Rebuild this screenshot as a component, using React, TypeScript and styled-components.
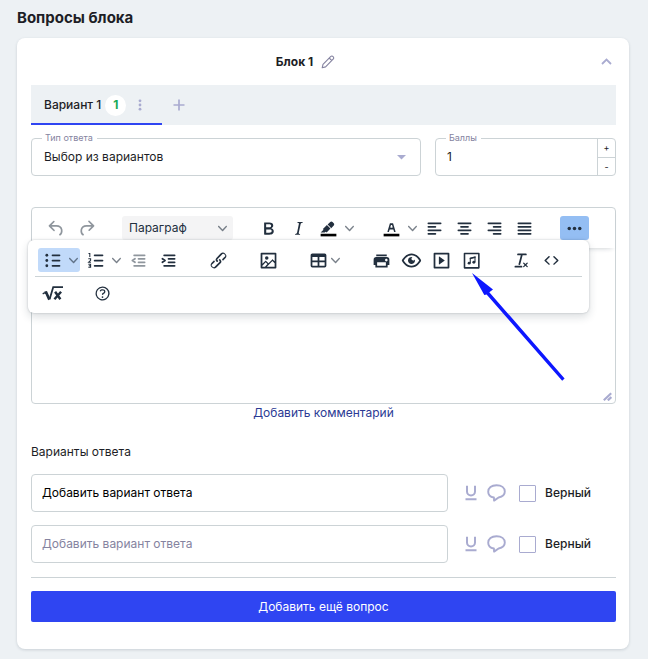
import React from "react";
import styled, { createGlobalStyle, css } from "styled-components";

const color = {
  page: "#edf1f4",
  ink: "#1d1e26",
  toolInk: "#222f3e",
  line: "#ccd3d6",
  muted: "#8583a0",
  lilac: "#a9abd0",
  blue: "#2f45f2",
  link: "#2b3a94",
  green: "#18a957",
};

const GlobalStyle = createGlobalStyle`
  *, *::before, *::after { box-sizing: border-box; }
  body {
    margin: 0;
    background: ${color.page};
    color: ${color.ink};
    font: 400 12px/16px Inter, "Liberation Sans", sans-serif;
  }
  button, input, select, textarea { font: inherit; color: inherit; letter-spacing: inherit; }
  button { padding: 0; border: 0; background: none; cursor: pointer; }
  svg { display: block; }
`;

/* ---------- page frame ---------- */

const Page = styled.main`
  padding: 8px 19px 10px 17px;
`;

const PageTitle = styled.h1`
  margin: 0 0 10px;
  font-size: 15px;
  line-height: 20px;
  font-weight: 700;
`;

const Card = styled.section`
  padding: 0 13px 27px 14px;
  border-radius: 8px;
  background: #fff;
  box-shadow: 0 1px 3px rgba(40, 60, 80, 0.18);
`;

const CardHeader = styled.header`
  display: flex;
  align-items: center;
  height: 47px;
`;

const CardTitle = styled.div`
  flex: 1;
  display: flex;
  align-items: center;
  justify-content: center;
  gap: 8px;
`;

const BlockName = styled.h2`
  margin: 0;
  font-size: 12px;
  font-weight: 700;
`;

const IconButton = styled.button<{ $width?: number; $tone?: string }>`
  display: flex;
  align-items: center;
  justify-content: center;
  width: ${(p) => (p.$width ? `${p.$width}px` : "auto")};
  color: ${(p) => p.$tone ?? color.lilac};
`;

const CollapseButton = styled(IconButton)`
  justify-content: flex-end;
  padding-right: 4px;
`;

/* ---------- tabs ---------- */

const TabBar = styled.div`
  display: flex;
  height: 40px;
  margin-bottom: 13px;
  background: ${color.page};
`;

const TabItem = styled.div`
  display: flex;
  align-items: center;
  padding: 2px 8px 0 13px;
  border-bottom: 2px solid ${color.blue};
`;

const TabButton = styled.button`
  display: flex;
  align-items: center;
  gap: 4px;
  font-weight: 500;
`;

const Count = styled.span`
  display: grid;
  place-items: center;
  width: 21px;
  height: 21px;
  border-radius: 50%;
  background: #fff;
  color: ${color.green};
  font-weight: 700;
`;

/* ---------- form fields ---------- */

const Fields = styled.div`
  display: flex;
  gap: 14px;
  margin-bottom: 31px;
`;

const Field = styled.div<{ $width?: number }>`
  position: relative;
  display: flex;
  ${(p) => (p.$width ? `width: ${p.$width}px;` : "flex: 1;")}
  height: 38px;
  border: 1px solid ${color.line};
  border-radius: 4px;
`;

const FieldLabel = styled.label`
  position: absolute;
  top: -7px;
  left: 10px;
  padding: 0 4px 0 3px;
  background: #fff;
  color: ${color.muted};
  font-size: 9px;
  line-height: 12px;
`;

const Select = styled.select`
  flex: 1;
  min-width: 0;
  padding: 0 12px;
  border: 0;
  appearance: none;
  background: transparent;
`;

const SelectCaret = styled.svg`
  position: absolute;
  right: 14px;
  top: 16px;
  color: ${color.lilac};
  pointer-events: none;
`;

const NumberInput = styled.input`
  flex: 1;
  min-width: 0;
  padding: 0 11px;
  border: 0;
  background: transparent;
`;

const Stepper = styled.div`
  display: grid;
  grid-template-rows: 1fr 1fr;
  width: 18px;
  border-left: 1px solid ${color.line};
  font-size: 9px;
  line-height: 12px;

  button + button { border-top: 1px solid ${color.line}; }
`;

/* ---------- rich text editor ---------- */

const Editor = styled.div`
  position: relative;
  display: flex;
  flex-direction: column;
  height: 197px;
  border: 1px solid ${color.line};
  border-radius: 4px;
  color: ${color.toolInk};
`;

const ToolRow = styled.div<{ $main?: boolean }>`
  display: flex;
  align-items: center;
  gap: 21px;
  ${(p) =>
    p.$main
      ? css`
          height: 40px;
          padding: 0 26px 0 10px;
          border-radius: 4px 4px 0 0;
          box-shadow: 0 3px 4px -2px rgba(34, 47, 62, 0.12), 0 6px 6px -6px rgba(34, 47, 62, 0.1);
        `
      : css`
          box-sizing: content-box;
          height: 32px;
          padding: 0 3px;
        `}
`;

const ToolGroup = styled.div`
  display: flex;
  gap: 1px;
`;

const ToolButton = styled.button<{ $wide?: boolean; $split?: boolean; $tint?: string; $faded?: boolean }>`
  display: flex;
  align-items: center;
  justify-content: flex-start;
  gap: ${(p) => (p.$split ? 6 : 2)}px;
  width: ${(p) => (p.$wide ? 42 : 29)}px;
  height: 24px;
  padding-left: 4px;
  border-radius: 3px;
  background: ${(p) => p.$tint ?? "transparent"};
  opacity: ${(p) => (p.$faded ? 0.5 : 1)};
`;

const FormatButton = styled.button`
  display: flex;
  align-items: center;
  justify-content: space-between;
  width: 111px;
  height: 24px;
  padding: 0 6px 0 7px;
  border-radius: 3px;
  background: #f4f4f5;
`;

const MorePanel = styled.div`
  position: absolute;
  z-index: 1;
  top: 32px;
  left: -4px;
  right: 26px;
  padding: 4px 7px;
  border-radius: 6px;
  background: #fff;
  box-shadow: 0 0 2px rgba(34, 47, 62, 0.28), 0 4px 8px rgba(34, 47, 62, 0.16);

  ${ToolRow} + ${ToolRow} { border-top: 1px solid ${color.line}; }
`;

const EditArea = styled.textarea`
  flex: 1;
  padding: 12px;
  border: 0;
  outline: 0;
  resize: none;
  background: transparent;
`;

const ResizeGrip = styled.svg`
  position: absolute;
  right: 3px;
  bottom: 2px;
  color: ${color.lilac};
`;

const Pointer = styled.svg`
  position: absolute;
  z-index: 2;
  top: 64px;
  left: 438px;
  pointer-events: none;
`;

const CommentLink = styled.a`
  display: block;
  width: fit-content;
  margin: 1px auto 23px;
  color: ${color.link};
  text-decoration: none;
`;

/* ---------- answers ---------- */

const SectionTitle = styled.h3`
  margin: 0 0 14px;
  font-size: 12px;
  font-weight: 400;
`;

const AnswerRow = styled.div`
  display: flex;
  align-items: center;
  padding-right: 25px;
  margin-bottom: 13px;
`;

const AnswerInput = styled.input`
  flex: 1;
  min-width: 0;
  height: 38px;
  margin-right: 17px;
  padding: 0 10px 2px;
  border: 1px solid ${color.line};
  border-radius: 4px;
  color: #000;

  &::placeholder { color: ${color.muted}; opacity: 1; }
`;

const AnswerTools = styled.div`
  display: flex;
  align-items: center;
  gap: 10px;
  margin-right: 13px;
`;

const CorrectLabel = styled.label`
  display: flex;
  align-items: center;
  gap: 9px;
  font-weight: 500;

  input {
    appearance: none;
    width: 17px;
    height: 17px;
    margin: 0;
    border: 1px solid ${color.lilac};
    border-radius: 1px;
    background: #fff;
  }
  input:checked { background: ${color.blue}; }
`;

const Divider = styled.hr`
  height: 1px;
  margin: 14px 0 13px;
  border: 0;
  background: ${color.line};
`;

const PrimaryButton = styled.button`
  width: 100%;
  height: 31px;
  border-radius: 2px;
  background: ${color.blue};
  color: #fff;
`;

/* ---------- drawings ---------- */

const icons: Record<string, React.ReactNode> = {
  undo: <path d="M6.4 8H12c3.7 0 6.2 2 6.8 5.1.6 2.7-.4 5.6-2.3 6.8a1 1 0 0 1-1-1.8c1.1-.6 1.8-2.7 1.4-4.6-.5-2.1-2.1-3.5-4.9-3.5H6.4l3.3 3.3a1 1 0 1 1-1.4 1.4l-5-5a1 1 0 0 1 0-1.4l5-5a1 1 0 0 1 1.4 1.4L6.4 8Z" />,
  redo: <path d="M17.6 10H12c-2.8 0-4.4 1.4-4.9 3.5-.4 2 .3 4 1.4 4.6a1 1 0 1 1-1 1.8c-2-1.2-2.9-4.1-2.3-6.8.6-3 3-5.1 6.8-5.1h5.6l-3.3-3.3a1 1 0 1 1 1.4-1.4l5 5a1 1 0 0 1 0 1.4l-5 5a1 1 0 0 1-1.4-1.4l3.3-3.3Z" />,
  bold: <path d="M7.8 19c-.3 0-.5 0-.6-.2l-.2-.5V5.7c0-.2 0-.4.2-.5l.6-.2h5c1.5 0 2.7.3 3.5 1 .7.6 1.1 1.4 1.1 2.5a3 3 0 0 1-.6 1.9c-.4.6-1 1-1.6 1.2.4.1.9.3 1.3.6s.8.7 1 1.2c.4.4.5 1 .5 1.6 0 1.3-.4 2.3-1.3 3-.8.7-2.1 1-3.8 1H7.8Zm5-8.3c.6 0 1.2-.1 1.6-.5.4-.3.6-.7.6-1.3 0-1.1-.8-1.7-2.3-1.7H9.3v3.5h3.4Zm.5 6c.7 0 1.3-.1 1.7-.4.4-.4.6-.9.6-1.5s-.2-1-.7-1.4c-.4-.3-1-.4-2-.4H9.4v3.8h4Z" />,
  italic: <path d="m16.7 4.7-.1.9h-.3c-.6 0-1 0-1.4.3-.3.3-.4.6-.5 1.1l-2.1 9.8v.6c0 .5.4.8 1.4.8h.2l-.2.8H8l.2-.8h.2c1.1 0 1.8-.5 2-1.5l2-9.8.1-.5c0-.6-.4-.8-1.4-.8h-.3l.2-.9h5.8Z" />,
  highlight: (
    <>
      <path d="M3 18h18v3H3z" fill="#000" />
      <path d="M7.7 16.7H3l3.3-3.3-.7-.8L10.2 8l4 4.1-4 4.2c-.2.2-.6.2-.8 0l-.6-.7-1.1 1.1Zm5-7.5L11 7.4l3-2.9a2 2 0 0 1 2.6 0L18 6c.7.7.7 2 0 2.7l-2.900 2.900-1.800-1.800-.5-.6Z" />
    </>
  ),
  textColor: (
    <>
      <path d="M3 18h18v3H3z" fill="#000" />
      <path d="M8.7 16h-.8a.5.5 0 0 1-.5-.6l2.7-9c.1-.3.3-.4.5-.4h2.8c.2 0 .4.1.5.4l2.7 9a.5.5 0 0 1-.5.6h-.8a.5.5 0 0 1-.4-.4l-.7-2.2c0-.3-.3-.4-.5-.4h-3.4c-.2 0-.4.1-.5.4l-.7 2.2c0 .3-.2.4-.4.4Zm2.6-7.6-.6 2a.5.5 0 0 0 .5.6h1.6a.5.5 0 0 0 .5-.6l-.6-2c0-.3-.3-.4-.5-.4h-.4c-.2 0-.4.1-.5.4Z" />
    </>
  ),
  alignLeft: <path fill="none" stroke="currentColor" strokeWidth="2" strokeLinecap="round" d="M5 6h14M5 10h8M5 14h14M5 18h8" />,
  alignCenter: <path fill="none" stroke="currentColor" strokeWidth="2" strokeLinecap="round" d="M5 6h14M8 10h8M5 14h14M8 18h8" />,
  alignRight: <path fill="none" stroke="currentColor" strokeWidth="2" strokeLinecap="round" d="M5 6h14M11 10h8M5 14h14M11 18h8" />,
  alignJustify: <path fill="none" stroke="currentColor" strokeWidth="2" strokeLinecap="round" d="M5 6h14M5 10h14M5 14h14M5 18h14" />,
  more: (
    <>
      <circle cx="6" cy="12" r="2" />
      <circle cx="12" cy="12" r="2" />
      <circle cx="18" cy="12" r="2" />
    </>
  ),
  bullets: (
    <>
      <path fill="none" stroke="currentColor" strokeWidth="2" strokeLinecap="round" d="M12 6h8M12 12h8M12 18h8" />
      <circle cx="5.5" cy="6" r="1.6" />
      <circle cx="5.5" cy="12" r="1.6" />
      <circle cx="5.5" cy="18" r="1.6" />
    </>
  ),
  numbers: (
    <>
      <path fill="none" stroke="currentColor" strokeWidth="2" strokeLinecap="round" d="M11 6h9M11 12h9M11 18h9" />
      <path fill="none" stroke="currentColor" strokeWidth="1.2" d="M4 4h1.5v4M3.8 10h2.6v1.8L4.2 13.9h2.6M3.8 16.2h2.6v3.6H3.8M4.4 18h2" />
    </>
  ),
  outdent: (
    <>
      <path fill="none" stroke="currentColor" strokeWidth="2" strokeLinecap="round" d="M7 6h12M12 10h7M12 14h7M7 18h12" />
      <path fill="none" stroke="currentColor" strokeWidth="2" strokeLinecap="round" strokeLinejoin="round" d="m8 10-3 2 3 2" />
    </>
  ),
  indent: (
    <>
      <path fill="none" stroke="currentColor" strokeWidth="2" strokeLinecap="round" d="M7 6h12M12 10h7M12 14h7M7 18h12" />
      <path fill="none" stroke="currentColor" strokeWidth="2" strokeLinecap="round" strokeLinejoin="round" d="m5 10 3 2-3 2" />
    </>
  ),
  link: <path d="M6.2 12.3a1 1 0 0 1 1.4 1.4l-2 2a2 2 0 1 0 2.6 2.8l4.8-4.8a1 1 0 0 0 0-1.4 1 1 0 1 1 1.4-1.3 2.9 2.9 0 0 1 0 4L9.6 20a3.9 3.9 0 0 1-5.5-5.5l2-2Zm11.6-.6a1 1 0 0 1-1.4-1.4l2-2a2 2 0 1 0-2.6-2.8L11 10.3a1 1 0 0 0 0 1.4A1 1 0 1 1 9.6 13a2.9 2.9 0 0 1 0-4L14.4 4a3.9 3.9 0 0 1 5.5 5.5l-2 2Z" />,
  image: <path d="m5 15.7 3.3-3.2c.3-.3.7-.3 1 0L12 15l4.1-4c.3-.4.8-.4 1 0l2 1.9V5H5v10.7ZM5 18V19h3l2.8-2.9-2-2L5 17.9Zm14-3-2.5-2.4-6.4 6.5H19v-4ZM4 3h16c.6 0 1 .4 1 1v16c0 .6-.4 1-1 1H4a1 1 0 0 1-1-1V4c0-.6.4-1 1-1Zm6 8a2 2 0 1 0 0-4 2 2 0 0 0 0 4Z" />,
  table: <path d="M19 4a2 2 0 0 1 2 2v12a2 2 0 0 1-2 2H5a2 2 0 0 1-2-2V6c0-1.1.9-2 2-2h14ZM5 14v4h6v-4H5Zm14 0h-6v4h6v-4Zm0-6h-6v4h6V8ZM5 12h6V8H5v4Z" />,
  print: <path d="M18 8H6a3 3 0 0 0-3 3v6h2v3h14v-3h2v-6a3 3 0 0 0-3-3Zm-1 10H7v-4h10v4Zm.5-5c-.8 0-1.5-.7-1.5-1.5s.7-1.5 1.5-1.5 1.5.7 1.5 1.5-.7 1.5-1.5 1.5Zm.5-8H6v2h12V5Z" />,
  preview: <path d="M3.5 12.5c.5.8 1.1 1.6 1.8 2.3 2 2 4.2 3.2 6.7 3.2s4.7-1.2 6.7-3.2a16.2 16.2 0 0 0 2.1-2.8 15.7 15.7 0 0 0-2.1-2.8c-2-2-4.2-3.2-6.7-3.2a9.3 9.3 0 0 0-6.7 3.2A16.2 16.2 0 0 0 3.2 12c0 .2.2.3.3.5Zm-2.4-1 .7-1.2L4 7.8C6.2 5.4 8.9 4 12 4c3 0 5.8 1.4 8.1 3.8a18.2 18.2 0 0 1 2.8 3.7v1l-.7 1.2-2.1 2.5c-2.3 2.4-5 3.8-8.1 3.8-3 0-5.8-1.4-8.1-3.8a18.2 18.2 0 0 1-2.8-3.7 1 1 0 0 1 0-1Zm12-3.3a2 2 0 1 0 2.7 2.6 4 4 0 1 1-2.6-2.6Z" />,
  embed: <path d="M4 3h16c.6 0 1 .4 1 1v16c0 .6-.4 1-1 1H4a1 1 0 0 1-1-1V4c0-.6.4-1 1-1Zm1 2v14h14V5H5Zm4.8 2.6 5.6 4a.5.5 0 0 1 0 .8l-5.6 4A.5.5 0 0 1 9 16V8a.5.5 0 0 1 .8-.4Z" />,
  audio: (
    <>
      <path fill="none" stroke="currentColor" strokeWidth="1.8" strokeLinejoin="round" d="M4 4h16.4v16.4H4z" />
      <path fill="none" stroke="currentColor" strokeWidth="1.2" d="M10.6 14.800V9.500l5.400-1.400v5.500" />
      <path d="M10 8.900 16.600 7.200v1.800L10 10.700z" />
      <circle cx="9.300" cy="15" r="1.700" />
      <circle cx="14.700" cy="14" r="1.700" />
    </>
  ),
  clear: <path d="M13.2 6a1 1 0 0 1 0 .2l-2.6 10a1 1 0 0 1-1 .8h-.2a.8.8 0 0 1-.8-1l2.6-10H8a1 1 0 1 1 0-2h9a1 1 0 0 1 0 2h-3.8ZM5 18h7a1 1 0 0 1 0 2H5a1 1 0 0 1 0-2Zm13 1.5L16.5 18 15 19.5a.7.7 0 0 1-1-1l1.5-1.5-1.5-1.5a.7.7 0 0 1 1-1l1.5 1.5 1.5-1.5a.7.7 0 0 1 1 1L17.5 17l1.5 1.5a.7.7 0 0 1-1 1Z" />,
  code: <path d="M9.8 15.7c.3.3.3.8 0 1-.3.4-.9.4-1.2 0l-4.4-4.1a.8.8 0 0 1 0-1.2l4.4-4.2c.3-.3.9-.3 1.2 0 .3.3.3.8 0 1.1L6 12l3.8 3.7ZM14.2 15.7c-.3.3-.3.8 0 1 .4.4.9.4 1.2 0l4.4-4.1c.3-.3.3-.9 0-1.2l-4.4-4.2a.8.8 0 0 0-1.2 0c-.3.3-.3.8 0 1.1L18 12l-3.8 3.7Z" />,
  math: (
    <>
      <path fill="none" stroke="currentColor" strokeWidth="2" d="M8.700 18.600 12.800 4.800H24" />
      <path fill="none" stroke="currentColor" strokeWidth="3" d="m3 11.200 1.800-.3L8.400 19" />
      <path fill="none" stroke="currentColor" strokeWidth="1.400" d="m.8 12.400 2.500-1.400" />
      <path fill="none" stroke="currentColor" strokeWidth="2.800" d="m15 10 6 8.600M14.200 18.600 21.800 10" />
    </>
  ),
  help: (
    <>
      <path d="M12 5.5a6.5 6.5 0 0 0-6 9 6.3 6.3 0 0 0 1.4 2l1 1a6.3 6.3 0 0 0 3.6 1 6.5 6.5 0 0 0 6-9 6.3 6.3 0 0 0-1.4-2l-1-1a6.3 6.3 0 0 0-3.6-1ZM12 4a7.8 7.8 0 0 1 5.7 2.3A8 8 0 1 1 12 4Z" />
      <path d="M9.6 9.7a.7.7 0 0 1-.7-.8c0-1.1 1.5-1.8 3.2-1.8 1.8 0 3.2.8 3.2 2.4 0 1.4-.4 2.1-1.5 2.8-.2 0-.3.1-.3.2a2 2 0 0 0-.8.8.8.8 0 0 1-1.4-.6c.3-.7.8-1 1.3-1.5l.4-.2c.7-.4.8-.6.8-1.5 0-.5-.6-.9-1.7-.9-.5 0-1 .1-1.4.3-.2 0-.3.1-.3.2v-.2c0 .4-.4.8-.8.8Z" />
      <circle cx="12" cy="16" r="1" />
    </>
  ),
};

const ToolIcon = ({ name }: { name: string }) => (
  <svg width="21" height="21" viewBox="0 0 24 24" fill="currentColor" fillRule="evenodd" aria-hidden="true">
    {icons[name]}
  </svg>
);

const Chevron = () => (
  <svg width="9" height="9" viewBox="0 0 10 10" fill="currentColor" opacity="0.6" aria-hidden="true">
    <path d="M8.7 2.2c.3-.3.8-.3 1 0 .4.4.4.9 0 1.2L5.7 7.8c-.3.3-.9.3-1.2 0L.2 3.4a.8.8 0 0 1 0-1.2c.3-.3.8-.3 1.1 0L5 6l3.7-3.8Z" />
  </svg>
);

interface ToolDef {
  icon: string;
  label: string;
  split?: boolean;
  menu?: boolean;
  tint?: string;
  faded?: boolean;
}

const Tools = ({ items }: { items: ToolDef[] }) => (
  <ToolGroup>
    {items.map((t) => (
      <ToolButton
        key={t.icon}
        type="button"
        aria-label={t.label}
        $wide={t.split || t.menu}
        $split={t.split}
        $tint={t.tint}
        $faded={t.faded}
      >
        <ToolIcon name={t.icon} />
        {(t.split || t.menu) && <Chevron />}
      </ToolButton>
    ))}
  </ToolGroup>
);

const history: ToolDef[] = [
  { icon: "undo", label: "Отменить", faded: true },
  { icon: "redo", label: "Вернуть", faded: true },
];

const mainGroups: ToolDef[][] = [
  [
    { icon: "bold", label: "Полужирный" },
    { icon: "italic", label: "Курсив" },
    { icon: "highlight", label: "Цвет фона", split: true },
  ],
  [
    { icon: "textColor", label: "Цвет текста", split: true },
    { icon: "alignLeft", label: "По левому краю" },
    { icon: "alignCenter", label: "По центру" },
    { icon: "alignRight", label: "По правому краю" },
    { icon: "alignJustify", label: "По ширине" },
  ],
  [{ icon: "more", label: "Ещё", tint: "#94bef3" }],
];

const panelRows: ToolDef[][][] = [
  [
    [
      { icon: "bullets", label: "Маркированный список", split: true, tint: "#c1dafa" },
      { icon: "numbers", label: "Нумерованный список", split: true },
      { icon: "outdent", label: "Уменьшить отступ", faded: true },
      { icon: "indent", label: "Увеличить отступ" },
    ],
    [{ icon: "link", label: "Ссылка" }],
    [{ icon: "image", label: "Изображение" }],
    [{ icon: "table", label: "Таблица", menu: true }],
    [
      { icon: "print", label: "Печать" },
      { icon: "preview", label: "Предпросмотр" },
      { icon: "embed", label: "Видео" },
      { icon: "audio", label: "Аудио" },
    ],
    [
      { icon: "clear", label: "Очистить формат" },
      { icon: "code", label: "Исходный код" },
    ],
  ],
  [[{ icon: "math", label: "Формула" }], [{ icon: "help", label: "Помощь" }]],
];

const Answer = ({ value }: { value?: string }) => (
  <AnswerRow>
    <AnswerInput aria-label="Вариант ответа" defaultValue={value} placeholder="Добавить вариант ответа" />
    <AnswerTools>
      <IconButton type="button" aria-label="Подчеркнуть">
        <svg width="12" height="16" viewBox="0 0 12 16" fill="none" stroke="currentColor" strokeWidth="2">
          <path d="M2 .8v5.700a4 4 0 0 0 8 0V.8M.5 14.200h11" />
        </svg>
      </IconButton>
      <IconButton type="button" aria-label="Комментарий">
        <svg width="19" height="18" viewBox="0 0 19 18" fill="none" stroke="currentColor" strokeWidth="1.900" strokeLinejoin="round">
          <path d="M6.900 13.500C3.400 13 1.200 10.800 1.200 7.700 1.200 3.800 4.400 1.200 9.500 1.200S17.800 3.800 17.800 7.600c0 3.300-2.600 5.300-6.200 5.900L7.100 16.600Z" />
        </svg>
      </IconButton>
    </AnswerTools>
    <CorrectLabel>
      <input type="checkbox" />
      Верный
    </CorrectLabel>
  </AnswerRow>
);

export default function App() {
  return (
    <>
      <GlobalStyle />
      <Page>
        <PageTitle>Вопросы блока</PageTitle>
        <Card>
          <CardHeader>
            <CardTitle>
              <BlockName>Блок 1</BlockName>
              <IconButton type="button" aria-label="Переименовать" $tone={color.muted}>
                <svg width="14" height="14" viewBox="0 0 14 14" fill="none" stroke="currentColor" strokeWidth="1.100" strokeLinejoin="round">
                  <path d="M1.200 12.800 2 9.300l7.600-7.700c.8-.8 1.800-.8 2.500 0 .8.800.8 1.800 0 2.600L4.600 11.900ZM8.200 3l2.600 2.600" />
                </svg>
              </IconButton>
            </CardTitle>
            <CollapseButton type="button" aria-label="Свернуть" $width={36}>
              <svg width="11" height="8" viewBox="0 0 11 8" fill="none" stroke="currentColor" strokeWidth="1.800">
                <path d="m1 6 4.500-4.400L10 6" />
              </svg>
            </CollapseButton>
          </CardHeader>

          <TabBar>
            <TabItem>
              <TabButton type="button">
                Вариант 1<Count>1</Count>
              </TabButton>
              <IconButton type="button" aria-label="Меню варианта" $width={28}>
                <svg width="4" height="12" viewBox="0 0 4 12" fill="currentColor">
                  <circle cx="2" cy="1.800" r="1.400" />
                  <circle cx="2" cy="6" r="1.400" />
                  <circle cx="2" cy="10.200" r="1.400" />
                </svg>
              </IconButton>
            </TabItem>
            <IconButton type="button" aria-label="Добавить вариант" $width={33}>
              <svg width="12" height="12" viewBox="0 0 12 12" fill="none" stroke="currentColor" strokeWidth="1.700">
                <path d="M6 .5v11M.5 6h11" />
              </svg>
            </IconButton>
          </TabBar>

          <Fields>
            <Field>
              <FieldLabel htmlFor="answer-type">Тип ответа</FieldLabel>
              <Select id="answer-type" defaultValue="choice">
                <option value="choice">Выбор из вариантов</option>
              </Select>
              <SelectCaret width="9" height="5" viewBox="0 0 9 5" fill="currentColor">
                <path d="M0 0h9L4.500 4.500z" />
              </SelectCaret>
            </Field>
            <Field $width={181}>
              <FieldLabel htmlFor="score">Баллы</FieldLabel>
              <NumberInput id="score" inputMode="numeric" defaultValue="1" />
              <Stepper>
                <button type="button">+</button>
                <button type="button">-</button>
              </Stepper>
            </Field>
          </Fields>

          <Editor>
            <ToolRow $main>
              <Tools items={history} />
              <FormatButton type="button">
                Параграф
                <Chevron />
              </FormatButton>
              {mainGroups.map((g) => (
                <Tools key={g[0].icon} items={g} />
              ))}
            </ToolRow>
            <EditArea aria-label="Текст вопроса" />
            <MorePanel>
              {panelRows.map((row, i) => (
                <ToolRow key={i}>
                  {row.map((g) => (
                    <Tools key={g[0].icon} items={g} />
                  ))}
                </ToolRow>
              ))}
            </MorePanel>
            <ResizeGrip width="9" height="9" viewBox="0 0 9 9" fill="none" stroke="currentColor" strokeWidth="2.200">
              <path d="M.8 8.200 8.200 1.200M4.800 8.400l3.600-3.400" />
            </ResizeGrip>
            <Pointer width="96" height="112" viewBox="0 0 96 112" fill="#0d17ff" aria-hidden="true">
              <path d="M2 1 23 17.400 19.300 20.200 94.600 106.400 92.200 108.800 16.600 22.600 14.300 23Z" />
            </Pointer>
          </Editor>
          <CommentLink href="#comment">Добавить комментарий</CommentLink>

          <SectionTitle>Варианты ответа</SectionTitle>
          <Answer value="Добавить вариант ответа" />
          <Answer />
          <Divider />
          <PrimaryButton type="button">Добавить ещё вопрос</PrimaryButton>
        </Card>
      </Page>
    </>
  );
}
